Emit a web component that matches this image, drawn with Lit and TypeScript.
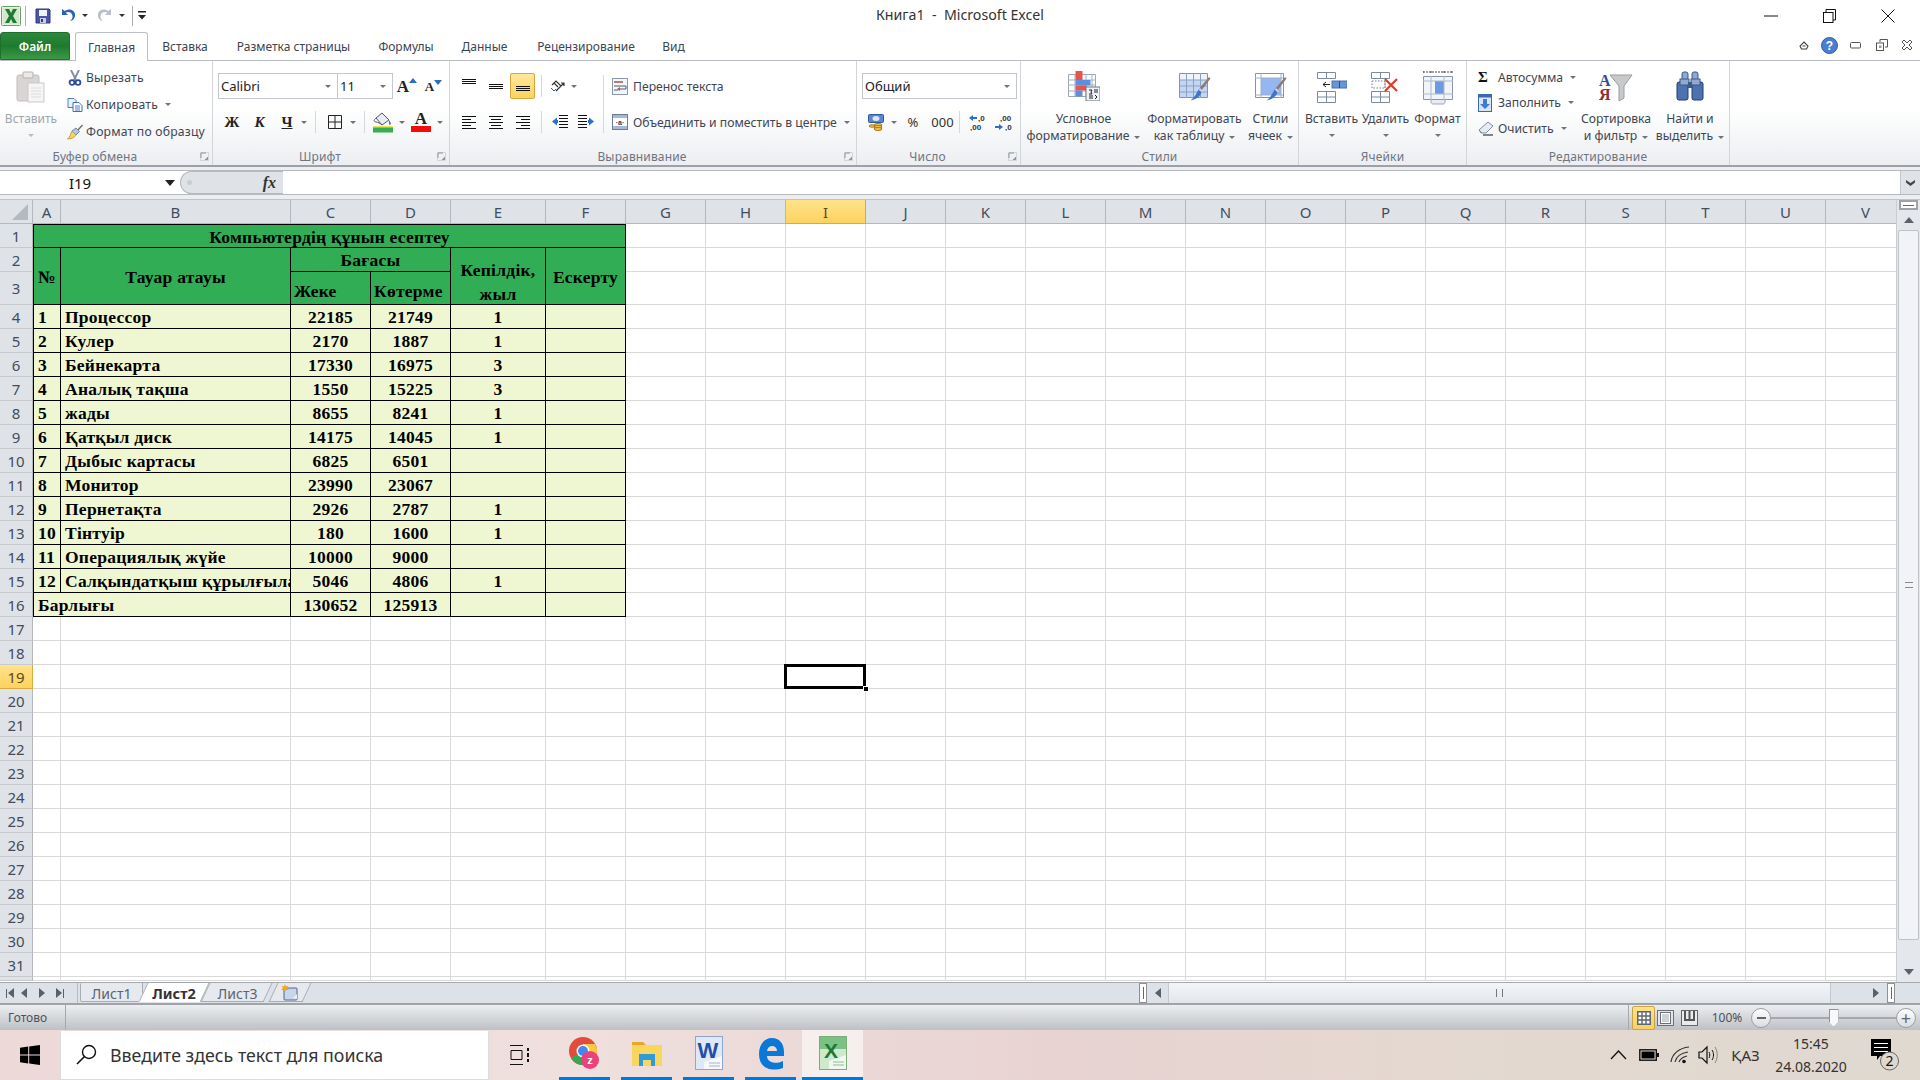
import { LitElement, html, svg, css } from "lit";
import { customElement } from "lit/decorators.js";

const dd = html`<span class="dd"></span>`;
const hLines = (w: number, rows: number[][], extra: unknown = null) => html`<svg width=${w} height="16" viewBox="0 0 ${w} 16">${rows.map(
  ([a, b, y]) => svg`<path d="M${a} ${y + 0.5}H${b}" stroke="#111" stroke-width="1"/>`)}${extra}</svg>`;

const I = {
  xl: html`<svg width="20" height="20" viewBox="0 0 20 20"><rect x=".5" y=".5" width="19" height="19" rx="1" fill="#e4f1df" stroke="#6a9d68"/><rect x="2" y="2" width="16" height="16" fill="#d2e8cb"/><path d="M4 3h4l2 4 2-4h4l-4 7 4 7h-4l-2-4-2 4H4l4-7z" fill="#1f7a34"/></svg>`,
  save: html`<svg width="16" height="16" viewBox="0 0 16 16"><path d="M1 1h13l1 1v13H1z" fill="#4a55a8" stroke="#2e3680"/><rect x="4" y="2" width="8" height="6" fill="#f0f3fa"/><rect x="5" y="10" width="6" height="5" fill="#c8cde0"/><rect x="6" y="11" width="2" height="3" fill="#333a80"/></svg>`,
  undo: html`<svg width="15" height="15" viewBox="0 0 15 15"><path d="M1 1v6h6L4.700 4.800C7.500 3 11 4.500 11.500 8c.3 2-1 4-2.500 5 3.500-.5 5.500-3.500 5-7C13 1.500 8 0 3.800 3z" fill="#2a64b8"/></svg>`,
  redo: html`<svg width="15" height="15" viewBox="0 0 15 15"><path d="M14 1v6H8l2.300-2.200C7.500 3 4 4.500 3.500 8c-.3 2 1 4 2.500 5C2.500 12.500.5 9.500 1 6 2 1.500 7 0 11.200 3z" fill="#b8bfc8"/></svg>`,
  qa: html`<svg width="8" height="9" viewBox="0 0 8 9"><path d="M0 0h8v1.500H0zM0 4h8L4 8.500z" fill="#222"/></svg>`,
  paste: html`<svg width="30" height="32" viewBox="0 0 30 32"><rect x="1" y="4" width="22" height="26" rx="2" fill="#d9d5d4" stroke="#c2bebd"/><rect x="7" y="1" width="10" height="6" rx="1" fill="#ebe8e6" stroke="#b5b1b0"/><path d="M12 12h16v19H12z" fill="#f6f5f5" stroke="#c9c9c9"/><path d="M15 17h10M15 20h10M15 23h10M15 26h10" stroke="#dcdcdc"/></svg>`,
  cut: html`<svg width="14" height="16" viewBox="0 0 14 16"><path d="M3 0l5 10M11 0L6 10" stroke="#7c8aa0" stroke-width="1.800"/><circle cx="4" cy="12.500" r="2.400" fill="none" stroke="#2b4c9a" stroke-width="1.800"/><circle cx="10" cy="12.500" r="2.400" fill="none" stroke="#2b4c9a" stroke-width="1.800"/></svg>`,
  copy: html`<svg width="16" height="14" viewBox="0 0 16 14"><path d="M1 .5h6l2 2v7H1z" fill="#eaf1fb" stroke="#4f7cc0"/><path d="M6 4.500h6l3 3v6H6z" fill="#fff" stroke="#3f6fb8"/><path d="M8 8h5M8 10h5M8 12h5" stroke="#4f7cc0"/></svg>`,
  brush: html`<svg width="16" height="16" viewBox="0 0 16 16"><path d="M10 6l5-5.500 1 1L11 7z" fill="#7a6a60"/><path d="M9 4l3.500 3.500L9 11 5 7z" fill="#b7c4dc" stroke="#7483a0"/><path d="M5 7l4 4c-2 3-5 4-8.500 4C3 13 3.500 10 5 7z" fill="#f2d36b" stroke="#c79f3c"/></svg>`,
  launch: html`<svg width="9" height="9" viewBox="0 0 9 9"><path d="M.5.500h8v8h-8z" fill="none" stroke="#d2d5d9"/><path d="M1 1h5M1 1v5" stroke="#8f959c"/><path d="M8 8H4.500L8 4.500z" fill="#8f959c"/></svg>`,
  grow: html`<svg width="8" height="5" viewBox="0 0 8 5"><path d="M0 5l4-5 4 5z" fill="#2a6cc0"/></svg>`,
  shrink: html`<svg width="8" height="5" viewBox="0 0 8 5"><path d="M0 0l4 5 4-5z" fill="#2a6cc0"/></svg>`,
  borders: html`<svg width="14" height="14" viewBox="0 0 14 14"><path d="M.5.500h13v13H.5zM7 .5v13M.5 7h13" fill="none" stroke="#222"/></svg>`,
  fill: html`<svg width="20" height="21" viewBox="0 0 20 21"><path d="M3 6l6-5 7 7-7 5z" fill="#e8ecf3" stroke="#4a5a78"/><path d="M3 6c-2 2-3 3 0 4 2 .5 4 1 6 3" fill="none" stroke="#4a5a78"/><path d="M16 8c1.500 2 2.500 3.500 1.500 4.500s-2 0-1.500-4.500z" fill="#3c76c8"/><rect y="14" width="20" height="2" fill="#f5e24c"/><rect y="15.500" width="20" height="5" fill="#33ae55"/></svg>`,
  orient: html`<svg width="16" height="15" viewBox="0 0 16 15"><path d="M2 6l4-4 5 5M4 4l4 4M6 12l8-8M11 4h3v3" fill="none" stroke="#333" stroke-width="1.200"/><path d="M1 9l3 3 2-2" stroke="#2a64b8" fill="none"/></svg>`,
  indL: html`<svg width="16" height="16" viewBox="0 0 16 16"><path d="M7 1.500h9M7 4.500h9M7 7.500h9M7 10.500h9M7 13.500h9" stroke="#111"/><path d="M0 7.500l5-4v2.500h1v3H5v2.500z" fill="#2a70c8"/></svg>`,
  indR: html`<svg width="16" height="16" viewBox="0 0 16 16"><path d="M0 1.500h9M0 4.500h9M0 7.500h9M0 10.500h9M0 13.500h9" stroke="#111"/><path d="M16 7.500l-5-4v2.500h-1v3h1v2.500z" fill="#2a70c8"/></svg>`,
  wrap: html`<svg width="16" height="17" viewBox="0 0 16 17"><rect x=".5" y=".5" width="15" height="16" fill="#f3f6fa" stroke="#8b97a8"/><path d="M2 4h9M2 8h12v3H8M2 12h4" stroke="#4a5a78" fill="none"/><path d="M8 9l-3 2 3 2z" fill="#c05a20"/><path d="M2 4h9" stroke="#c05a20"/></svg>`,
  merge: html`<svg width="16" height="16" viewBox="0 0 16 16"><rect x=".5" y=".5" width="15" height="15" fill="#fff" stroke="#6c7c94"/><rect x="1" y="1" width="14" height="3" fill="#a8b8d0"/><rect x="1" y="12" width="14" height="3" fill="#a8b8d0"/><text x="8" y="11" font-size="7" font-family="Liberation Sans" font-weight="700" text-anchor="middle" fill="#22406a">·a·</text></svg>`,
  money: html`<svg width="16" height="17" viewBox="0 0 16 17"><rect x=".5" y=".5" width="15" height="8" rx="1" fill="#5b86c8" stroke="#2d5aa0"/><ellipse cx="8" cy="4.500" rx="3.500" ry="2.500" fill="#dbe6f6"/><ellipse cx="10" cy="11" rx="4" ry="1.500" fill="#f3c84e" stroke="#a87a1c"/><ellipse cx="10" cy="13" rx="4" ry="1.500" fill="#f3c84e" stroke="#a87a1c"/><ellipse cx="10" cy="15" rx="4" ry="1.500" fill="#f3c84e" stroke="#a87a1c"/><ellipse cx="4" cy="12" rx="3" ry="1.200" fill="#f3c84e" stroke="#a87a1c"/></svg>`,
  decUp: html`<svg width="17" height="17" viewBox="0 0 17 17"><path d="M0 4l4-3v2h4v2H4v2z" fill="#2a70c8"/><text x="9" y="7" font-size="8" font-family="Liberation Sans" font-weight="700" fill="#333">,0</text><text x="1" y="16" font-size="8" font-family="Liberation Sans" font-weight="700" fill="#333">,00</text></svg>`,
  decDn: html`<svg width="17" height="17" viewBox="0 0 17 17"><text x="5" y="7" font-size="8" font-family="Liberation Sans" font-weight="700" fill="#333">,00</text><path d="M8 13l-4-3v2H0v2h4v2z" fill="#2a70c8"/><text x="10" y="16" font-size="8" font-family="Liberation Sans" font-weight="700" fill="#333">,0</text></svg>`,
  cond: html`<svg width="32" height="30" viewBox="0 0 32 30"><path d="M.5 3.500h27v22H.5z" fill="#fff" stroke="#9aa5b5"/><path d="M7 3v22M18 3v22M24 3v22M0 9h28M0 14h28M0 20h28" stroke="#a4afbf"/><rect x="7.500" y="0" width="7" height="9" fill="#e8544a"/><rect x="7.500" y="9" width="15" height="5.500" fill="#5f8fdc"/><rect x="7.500" y="14.500" width="11" height="5" fill="#e8544a"/><rect x="7.500" y="19.500" width="7" height="6" fill="#5f8fdc"/><rect x="18" y="16" width="14" height="14" fill="#eef2f7" stroke="#6a7686"/><path d="M21 19h3l-1 2 1 2h-3M26 19h4M26 21h4M21 25h4M21 27h4M27 24l2 2-2 2" fill="none" stroke="#222"/></svg>`,
  tbl: html`<svg width="32" height="32" viewBox="0 0 32 32"><path d="M.5 2.500h28v24H.5z" fill="#c5d6f4" stroke="#7f93b4"/><rect x="1" y="3" width="27" height="6" fill="#eef3fb"/><path d="M7.500 2v25M14.500 2v25M21.500 2v25M0 9h28M0 15h28M0 21h28" stroke="#8ca0c0"/><path d="M20 18L30 6l1.500 1.500L22 20z" fill="#8a7a70"/><path d="M21 17l3 3-1 1.500-3-3z" fill="#cbd3df"/><path d="M19.500 18.500l3 3c-2 5-6 7-11 8 4-3 6-7 8-11z" fill="#3f74c8"/></svg>`,
  cstyle: html`<svg width="32" height="32" viewBox="0 0 32 32"><path d="M.5 2.500h28v24H.5z" fill="#fff" stroke="#7f93b4"/><rect x="6" y="7" width="20" height="17" fill="#95b6f2"/><path d="M6 2v25M26 2v25M0 7h28M0 24h28" stroke="#9fb0c8"/><path d="M20 18L30 6l1.500 1.500L22 20z" fill="#8a7a70"/><path d="M21 17l3 3-1 1.500-3-3z" fill="#cbd3df"/><path d="M19.500 18.500l3 3c-2 5-6 7-11 8 4-3 6-7 8-11z" fill="#3f74c8"/></svg>`,
  ins: html`<svg width="30" height="32" viewBox="0 0 30 32"><path d="M.5 1.500h18v6H.5zM9.500 1.500v6M.5 20.500h18v11H.5zM.5 26h18M9.500 20.500v11" fill="#fff" stroke="#7a8aa0"/><rect x="15" y="10" width="15" height="7" fill="#6a93d8" stroke="#4a70b0"/><path d="M22.500 10v7" stroke="#2a4a88"/><path d="M6 13.500h7M9 11l-3 2.500 3 2.500" fill="none" stroke="#222"/></svg>`,
  del: html`<svg width="30" height="32" viewBox="0 0 30 32"><path d="M.5 1.500h18v6H.5zM9.500 1.500v6M.5 20.500h18v11H.5zM.5 26h18M9.500 20.500v11" fill="#fff" stroke="#7a8aa0"/><path d="M1 10h13v7H1zM14 10v7" fill="#fff" stroke="#6a7a96" stroke-dasharray="1.500 1.500"/><path d="M14 8l12 12M26 8L14 20" stroke="#e23a2a" stroke-width="2.200"/></svg>`,
  fmt: html`<svg width="30" height="34" viewBox="0 0 30 34"><path d="M0 1h29M0 0v3M8 0v3M21 0v3M29 0v3" stroke="#444" stroke-dasharray="2 1"/><path d="M.5 5.500h29v23H.5z" fill="#f1f4f8" stroke="#8a96a8"/><rect x="12" y="10" width="9" height="13" fill="#6e9ae4"/><path d="M8 5v24M21 5v24M0 10h30M0 23h30" stroke="#b0bac8"/><path d="M8 29v2c0 1 1 2 2 2h10c1 0 2-1 2-2v-2" fill="#e8ecf2" stroke="#9aa5b5"/></svg>`,
  fillD: html`<svg width="15" height="18" viewBox="0 0 15 18"><rect x=".5" y=".5" width="13" height="17" fill="#d9e6fa" stroke="#3a69b0"/><rect x="1" y="1" width="12" height="2.500" fill="#3a69b0"/><path d="M5 5h4v5h3l-5 5-5-5h3z" fill="#3d7bd4"/></svg>`,
  erase: html`<svg width="16" height="15" viewBox="0 0 16 15"><path d="M10 1l5 4-7 7H3L1 9z" fill="#e6ebf2" stroke="#7f8da2"/><path d="M1 9l3 3" stroke="#7f8da2"/><path d="M5 14h10" stroke="#111"/></svg>`,
  sort: html`<svg width="34" height="34" viewBox="0 0 34 34"><path d="M11 4h22l-8 11v12l-5 3V15z" fill="#c7c9cb" stroke="#9a9ca0"/><text x="0" y="15" font-size="16" font-weight="700" font-family="Liberation Serif" fill="#2a50a0">А</text><text x="0" y="29" font-size="16" font-weight="700" font-family="Liberation Serif" fill="#8a3030">Я</text></svg>`,
  find: html`<svg width="28" height="30" viewBox="0 0 28 30"><rect x="6" y="1" width="6" height="8" rx="2" fill="#8fa8d0" stroke="#3c5688"/><rect x="16" y="1" width="6" height="8" rx="2" fill="#8fa8d0" stroke="#3c5688"/><rect x="1" y="11" width="11" height="18" rx="2" fill="#4d72b0" stroke="#223c70"/><rect x="16" y="11" width="11" height="18" rx="2" fill="#4d72b0" stroke="#223c70"/><rect x="4" y="8" width="9" height="6" fill="#91a9d0" stroke="#3c5688"/><rect x="15" y="8" width="9" height="6" fill="#91a9d0" stroke="#3c5688"/><rect x="12" y="11" width="4" height="6" fill="#3a5a90"/></svg>`,
  min: html`<svg width="14" height="2" viewBox="0 0 14 2"><path d="M0 1h14" stroke="#111"/></svg>`,
  rest: html`<svg width="13" height="14" viewBox="0 0 13 14"><path d="M3 3V.5h9.500V11H10" fill="none" stroke="#111"/><rect x=".5" y="3.500" width="9.500" height="10" fill="#fff" stroke="#111"/></svg>`,
  close: html`<svg width="14" height="14" viewBox="0 0 14 14"><path d="M.5.500l13 13M13.500.5l-13 13" stroke="#111"/></svg>`,
  up: html`<svg width="10" height="9" viewBox="0 0 10 9"><path d="M5 1l4 4-1.500 3h-5L1 5zM3.500 5h3" fill="none" stroke="#444" stroke-width="1.100"/></svg>`,
  help: html`<svg width="17" height="17" viewBox="0 0 17 17"><circle cx="8.500" cy="8.500" r="8" fill="#4a7fd0" stroke="#2c5ea8"/><text x="8.500" y="13" font-size="12" font-weight="700" text-anchor="middle" font-family="Liberation Sans" fill="#fff">?</text></svg>`,
  smin: html`<svg width="11" height="7" viewBox="0 0 11 7"><rect x=".5" y=".5" width="10" height="5.500" rx="1" fill="#fff" stroke="#555"/></svg>`,
  srest: html`<svg width="12" height="12" viewBox="0 0 12 12"><path d="M4 3V.5h7.500V8H9" fill="#fff" stroke="#555"/><rect x=".5" y="4" width="7" height="7.500" fill="#fff" stroke="#555"/><rect x="3" y="6.500" width="2.500" height="2.500" fill="#999"/></svg>`,
  sclose: html`<svg width="12" height="12" viewBox="0 0 12 12"><path d="M1 3l2-2 3 3 3-3 2 2-3 3 3 3-2 2-3-3-3 3-2-2 3-3z" fill="#fff" stroke="#555"/></svg>`,
  more: html`<svg width="11" height="8" viewBox="0 0 11 8"><path d="M1 1l4.500 3L10 1v2.500L5.500 7 1 3.500z" fill="#444"/></svg>`,
  win: html`<svg width="20" height="20" viewBox="0 0 20 20"><path d="M0 2.800l8.200-1.200V9.500H0zM9.200 1.400L20 0v9.500H9.200zM0 10.500h8.200v7.900L0 17.200zM9.200 10.500H20V20L9.200 18.500z" fill="#000"/></svg>`,
  search: html`<svg width="21" height="21" viewBox="0 0 21 21"><circle cx="13" cy="8" r="6.500" fill="none" stroke="#111" stroke-width="1.400"/><path d="M8.500 12.500L1 20" stroke="#111" stroke-width="1.600"/></svg>`,
  task: html`<svg width="20" height="20" viewBox="0 0 20 20"><path d="M0 .5h13M0 19.500h13M1 5.500h11v9H1z" fill="none" stroke="#111"/><path d="M18 3v3M18 8v4M18 14v3" stroke="#111" stroke-width="2"/></svg>`,
  chrome: html`<svg width="31" height="32" viewBox="0 0 31 32"><circle cx="14" cy="14" r="14" fill="#e34b3c"/><path d="M14 14L2 21A14 14 0 0 0 20 27z" fill="#36a853"/><path d="M14 14l6 13A14 14 0 0 0 26 7H14z" fill="#f7c945"/><circle cx="14" cy="14" r="6.500" fill="#fff"/><circle cx="14" cy="14" r="5" fill="#4488ee"/><circle cx="21" cy="23" r="9" fill="#e9427c"/><text x="21" y="27" font-size="11" font-weight="700" text-anchor="middle" font-family="Liberation Sans" fill="#fff">z</text></svg>`,
  folder: html`<svg width="30" height="26" viewBox="0 0 30 26"><path d="M0 2h11l3 3h16v21H0z" fill="#f9d65c"/><path d="M0 2h11l3 3H0z" fill="#e7a72a"/><path d="M7 14h16v12h-4v-6h-8v6H7z" fill="#2d9bdc"/><rect x="11" y="20" width="8" height="6" fill="#f9d65c"/></svg>`,
  word: html`<svg width="28" height="34" viewBox="0 0 28 34"><rect x=".5" y=".5" width="27" height="33" fill="#dfe8f6" stroke="#8ea6cc"/><text x="13" y="22" font-size="22" font-weight="700" text-anchor="middle" font-family="Liberation Sans" fill="#1f4fa8">W</text><path d="M9 26l18-6v13H9z" fill="#f6f8fc"/><path d="M14 27h11M14 30h11" stroke="#a0b4d4"/></svg>`,
  edge: html`<svg width="26" height="33" viewBox="0 0 26 33"><path d="M1 17C1 8 6 1 14 1c7 0 12 5 12 14v4H9c0 6 8 9 16 5v7c-11 4-24 1-24-14zm8-3h10c0-6-9-7-10 0z" fill="#0a78d7"/></svg>`,
  xlBig: html`<svg width="28" height="34" viewBox="0 0 28 34"><rect x=".5" y=".5" width="27" height="33" fill="#cfe9cd" stroke="#7aae78"/><rect x="1" y="1" width="26" height="12" fill="#7cc184"/><text x="12" y="22" font-size="21" font-weight="700" text-anchor="middle" font-family="Liberation Sans" fill="#1d7a36">X</text><path d="M10 25l17-6v14H10z" fill="#f1f8ef"/><path d="M14 26h11M14 29h11" stroke="#8cc28c"/></svg>`,
  chev: html`<svg width="17" height="10" viewBox="0 0 17 10"><path d="M1 9l7.500-8L16 9" fill="none" stroke="#111" stroke-width="1.300"/></svg>`,
  batt: html`<svg width="20" height="12" viewBox="0 0 20 12"><rect x=".8" y=".8" width="16.500" height="10.400" fill="none" stroke="#111" stroke-width="1.400"/><rect x="2.500" y="2.500" width="13" height="7" fill="#000"/><rect x="18" y="4" width="2" height="4" fill="#111"/></svg>`,
  wifi: html`<svg width="20" height="18" viewBox="0 0 20 18"><path d="M1 16C2 8 9 2 19 1M5 16c1-5 6-9 13-10M9 16c1-3 4-5 8-6" fill="none" stroke="#333" stroke-width="1.200"/><circle cx="14" cy="15.500" r="1.800" fill="#111"/></svg>`,
  vol: html`<svg width="20" height="20" viewBox="0 0 20 20"><path d="M1 7h3l5-5v16l-5-5H1z" fill="none" stroke="#111" stroke-width="1.200"/><path d="M11 7c1 2 1 4 0 6M14 5c2 3 2 7 0 10" fill="none" stroke="#111"/><path d="M17 2c3 5 3 11 0 16" fill="none" stroke="#888"/></svg>`,
  note: html`<svg width="28" height="32" viewBox="0 0 28 32"><path d="M0 0h20v17H9l-3 4v-4H0z" fill="#000"/><path d="M3 4.500h14M3 8.500h14M3 12.500h14" stroke="#fff"/><circle cx="18.500" cy="22" r="9" fill="#e0d8d0" stroke="#666"/><text x="18.500" y="27" font-size="14" text-anchor="middle" font-family="Noto Sans" fill="#111">2</text></svg>`,
  vNormal: html`<svg width="14" height="14" viewBox="0 0 14 14"><rect width="14" height="14" fill="#5f6670"/><path d="M1.500 1.500h11v11h-11z" fill="#fff"/><path d="M5 1v12M9 1v12M1 5h12M1 9h12" stroke="#5f6670" stroke-width="1.400"/></svg>`,
  vPage: html`<svg width="17" height="16" viewBox="0 0 17 16"><rect x=".5" y=".5" width="16" height="15" fill="#e3e5e8" stroke="#6c7178"/><rect x="3.500" y="2.500" width="10" height="11" fill="#fff" stroke="#6c7178"/><path d="M5 5h7M5 7h7M5 9h7M5 11h7" stroke="#a0a4a9"/></svg>`,
  vBreak: html`<svg width="17" height="16" viewBox="0 0 17 16"><rect x=".5" y=".5" width="16" height="15" fill="#e8eaed" stroke="#666"/><path d="M4 1v9h9V1M8.500 1v9" fill="none" stroke="#555" stroke-width="2"/></svg>`,
  newSheet: html`<svg width="18" height="18" viewBox="0 0 18 18"><rect x="3" y="4" width="13" height="12" rx="1" fill="#c9d6ea" stroke="#50658c"/><path d="M12 14l4-4v5z" fill="#eef2f7"/><path d="M4 0l1 2.500L7.500 1.500 6 4l2 2-3 0-1 2-1-2-3 0 2-2-1.500-2.500L3 2.500z" fill="#f4a51f"/></svg>`,
};

const LETTERS = "ABCDEFGHIJKLMNOPQRSTUV".split("");
const ROWS = [
  ["1", "Процессор", "22185", "21749", "1"],
  ["2", "Кулер", "2170", "1887", "1"],
  ["3", "Бейнекарта", "17330", "16975", "3"],
  ["4", "Аналық тақша", "1550", "15225", "3"],
  ["5", "жады", "8655", "8241", "1"],
  ["6", "Қатқыл диск", "14175", "14045", "1"],
  ["7", "Дыбыс картасы", "6825", "6501", ""],
  ["8", "Монитор", "23990", "23067", ""],
  ["9", "Пернетақта", "2926", "2787", "1"],
  ["10", "Тінтуір", "180", "1600", "1"],
  ["11", "Операциялық жүйе", "10000", "9000", ""],
  ["12", "Салқындатқыш құрылғылар", "5046", "4806", "1"],
];

interface Cell { r: number; c: number; rs?: number; cs?: number; t?: unknown; k: string; }
const CELLS: Cell[] = [
  { r: 1, c: 1, cs: 6, t: "Компьютердің құнын есептеу", k: "h ctr" },
  { r: 2, c: 1, rs: 2, t: "№", k: "h ctr" },
  { r: 2, c: 2, rs: 2, t: "Тауар атауы", k: "h ctr" },
  { r: 2, c: 3, cs: 2, t: "Бағасы", k: "h ctr" },
  { r: 3, c: 3, t: "Жеке", k: "h low" },
  { r: 3, c: 4, t: "Көтерме", k: "h low" },
  { r: 2, c: 5, rs: 2, t: html`Кепілдік,<br />жыл`, k: "h ctr wrapc" },
  { r: 2, c: 6, rs: 2, t: "Ескерту", k: "h ctr" },
  ...ROWS.flatMap((v, i) => {
    const r = i + 4;
    return [
      { r, c: 1, t: v[0], k: "b" },
      { r, c: 2, t: v[1], k: "b" },
      { r, c: 3, t: v[2], k: "b ctr" },
      { r, c: 4, t: v[3], k: "b ctr" },
      { r, c: 5, t: v[4], k: "b ctr" },
      { r, c: 6, t: "", k: "b" },
    ];
  }),
  { r: 16, c: 1, cs: 2, t: "Барлығы", k: "b" },
  { r: 16, c: 3, t: "130652", k: "b ctr" },
  { r: 16, c: 4, t: "125913", k: "b ctr" },
  { r: 16, c: 5, t: "", k: "b" },
  { r: 16, c: 6, t: "", k: "b" },
];

@customElement("app-root")
export class AppRoot extends LitElement {
  static styles = css`
    :host { display: block; width: 1920px; height: 1080px; overflow: hidden; background: #fff;
      font-family: "Noto Sans", "Liberation Sans", sans-serif; font-size: 12px; color: #3f4652; }
    * { box-sizing: border-box; }
    .app { display: flex; flex-direction: column; width: 1920px; height: 1080px; }

    .dd { display: inline-block; width: 0; height: 0; border: 3px solid transparent; border-top: 3px solid #6f747b; border-bottom: 0; vertical-align: middle; }

    .title { height: 32px; display: grid; grid-template-columns: 1fr auto 1fr; align-items: center; background: #fff; }
    .qat { display: grid; grid-template-columns: 21px 8px 27px 24px 10px 29px 6px 14px 6px; justify-content: start; justify-items: center; align-items: center; }
    .qat .dd { border-top-color: #333; }
    .vsep { width: 1px; height: 20px; background: #a9adb3; }
    .ttext { font-size: 14.2px; color: #333; padding-bottom: 2px; }
    .wctl { display: grid; grid-template-columns: 58px 58px 60px; justify-items: center; align-items: center; justify-content: end; padding-right: 2px; }

    .tabs { height: 29px; display: flex; align-items: stretch; }
    .file { width: 70px; background: linear-gradient(#2c8a3b, #1f7a2f 50%, #3c9a45); border-radius: 3px 3px 0 0; border: 1px solid #1e6e2c; color: #fff; font-weight: 600; display: flex; align-items: center; justify-content: center; }
    .tab { display: flex; align-items: center; justify-content: center; font-size: 12px; color: #3c4450; }
    .home { width: 73px; margin-left: 5px; border: 1px solid #bcc0c5; border-bottom: 0; border-radius: 3px 3px 0 0; background: #fff; margin-bottom: -1px; position: relative; z-index: 1; }
    .t1 { width: 74px; } .t2 { width: 143px; } .t3 { width: 82px; } .t4 { width: 75px; } .t5 { width: 128px; } .t6 { width: 47px; }
    .sub { margin-left: auto; display: grid; grid-template-columns: 29px 22px 30px 23px 27px; justify-items: center; align-items: center; padding-bottom: 2px; }

    .ribbon { height: 107px; display: flex; border-top: 1px solid #b9bcc1; border-bottom: 2px solid #9da1a7; font-size: 12.2px;
      background: linear-gradient(#fff 0, #fff 45%, #eceef1 100%); }
    .group { display: flex; flex-direction: column; border-right: 1px solid #d2d5da; }
    .gbody { height: 86px; display: flex; }
    .glabel { height: 18px; display: flex; align-items: center; color: #6d7582; font-size: 12px; line-height: 14px; letter-spacing: .15px; padding-top: 1px; }
    .glabel span { flex: 1; text-align: center; }
    .lch { width: 22px; display: flex; justify-content: center; padding-left: 6px; }

    .g-clip { width: 213px; } .g-font { width: 237px; } .g-align { width: 407px; } .g-num { width: 164px; }
    .g-style { width: 278px; } .g-cell { width: 168px; } .g-edit { width: 263px; border-right: 1px solid #d2d5da; }

    .big { display: flex; flex-direction: column; align-items: center; padding-top: 10px; line-height: 17px; text-align: center; white-space: nowrap; }
    .big .ico { height: 39px; display: flex; align-items: flex-start; justify-content: center; }
    .big .dd { margin-left: 5px; }
    .big .under { height: 17px; display: flex; align-items: center; justify-content: center; }
    .big .under .dd { margin: 0; }

    .paste { width: 62px; color: #a2a6ac; font-size: 12px; }
    .paste .dd { border-top-color: #bbb; }
    .small { flex: 1; padding-top: 3px; display: grid; grid-template-rows: repeat(3, 27px); }
    .si { display: flex; align-items: center; white-space: nowrap; }
    .si .i { width: 22px; display: flex; justify-content: center; }
    .si .dd { margin-left: 7px; }
    .small .si { padding-left: 2px; letter-spacing: .2px; }

    .rows2 { padding-top: 12px; display: grid; grid-template-rows: 26px 26px; row-gap: 10px; }
    .g-font .rows2 { padding-left: 5px; }
    .r { display: grid; justify-items: center; align-items: center; }
    .fr1 { grid-template-columns: 120px 55px 28px 25px; }
    .fr2 { grid-template-columns: 28px 27px 28px 6px 16px 23px 14px 8px 30px 8px 30px 8px; }
    .combo { width: 100%; height: 26px; border: 1px solid #c3c6ca; background: #fff; display: flex; align-items: center; justify-content: space-between; padding: 0 6px 0 2px; color: #222; font-size: 13px; }
    .combo + .combo { border-left: 0; }
    .fs { font-family: "Liberation Serif", serif; font-weight: 700; color: #222; font-size: 15px; line-height: 1; }
    .fs.i2 { font-style: italic; }
    .fs.u2 { text-decoration: underline; }
    .grow { display: flex; align-items: flex-start; font-size: 17px; }
    .grow.s { font-size: 13px; align-items: flex-start; }
    .tcol { display: flex; flex-direction: column; align-items: center; font-size: 17px; line-height: 14px; }
    .tcol b { width: 20px; height: 6px; background: #f20d0d; display: block; }
    .sepv { width: 1px; height: 22px; background: #d5d8dc; }
    .al-left { width: 153px; padding-left: 5px; }
    .ar1 { grid-template-columns: 28px 26px 27px 10px 24px 8px; justify-content: start; }
    .ar2 { grid-template-columns: 28px 26px 27px 10px 27px 25px; justify-content: start; }
    .selb { width: 25px; height: 26px; background: linear-gradient(#ffe79a, #fdd35f); border: 1px solid #d6a73f; border-radius: 2px; display: flex; justify-content: center; align-items: center; }
    .sep-tall { width: 1px; height: 58px; background: #d5d8dc; margin-top: 14px; }
    .al-right { padding: 12px 0 0 8px; display: grid; grid-template-rows: 26px 26px; row-gap: 10px; }
    .al-right .si .i { width: 21px; justify-content: flex-start; }
    .al-right .si .dd { margin-left: 7px; }

    .g-num .rows2 { padding-left: 5px; width: 160px; }
    .nr2 { grid-template-columns: 28px 8px 30px 29px 4px 33px 19px; }
    .pct { font-size: 13px; color: #333; }

    .s1 { width: 125px; } .s2 { width: 97px; } .s3 { width: 55px; }
    .g-cell .gbody { padding-left: 5px; }
    .c1 { width: 55px; } .c2 { width: 53px; } .c3 { width: 51px; }

    .ed-left { width: 111px; padding: 3px 0 0 9px; display: grid; grid-template-rows: 26px 25px 26px; }
    .ed-left .si .i { width: 22px; justify-content: flex-start; padding-left: 2px; }
    .sigma { font-family: "Liberation Serif", serif; font-weight: 700; font-size: 15px; color: #111; line-height: 1; }
    .e1 { width: 76px; } .e2 { width: 72px; }

    .strip { height: 3px; background: #eceef1; }
    .fbar { height: 25px; display: flex; background: #fff; border-top: 1px solid #b6b9bd; border-bottom: 1px solid #b6b9bd; }
    .name { width: 180px; display: grid; grid-template-columns: 160px 20px; align-items: center; justify-items: center; color: #111; font-size: 15px; }
    .name .tri { width: 0; height: 0; border: 5px solid transparent; border-top: 6px solid #222; border-bottom: 0; }
    .pill { width: 103px; background: #dfe3e8; border-radius: 12px 0 0 12px; border: 1px solid #b6b9bd; border-right: 0; display: flex; align-items: center; justify-content: space-between; padding: 0 7px 0 6px; }
    .pill i { width: 5px; height: 5px; border-radius: 50%; background: #c9ccd1; }
    .fx { font-family: "Liberation Serif", serif; font-style: italic; font-weight: 700; font-size: 16px; color: #333; }
    .finput { flex: 1; background: #fff; }
    .fexp { width: 20px; background: #dfe3e8; display: flex; align-items: center; justify-content: center; border-left: 1px solid #c4c7cb; }
    .strip2 { height: 5px; background: #edeef1; border-bottom: 1px solid #c0c3c8; }

    .main { height: 782px; display: flex; }
    .sheet { width: 1896px; height: 782px; overflow: hidden; display: grid;
      grid-template-columns: 33px 28px 230px 80px 80px 95px 80px repeat(16, 80px);
      grid-template-rows: 24px 24px 24px 33px repeat(28, 24px) 4px; }
    .ch, .rh { background: #dfe3e8; color: #3f4d5e; font-size: 15px; display: flex; align-items: center; justify-content: center; border-right: 1px solid #b4b8be; border-bottom: 1px solid #b4b8be; }
    .rh { border-bottom-color: #c6cacf; }
    .corner { background: #dfe3e8; border-right: 1px solid #b4b8be; border-bottom: 1px solid #b4b8be; display: flex; align-items: flex-end; justify-content: flex-end; padding: 0 4px 3px 0; }
    .corner svg { display: block; }
    .on { background: linear-gradient(#ffe28a, #fdd35f); border-color: #d9aa3e; color: #5a4a20; }
    .cell { border-right: 1px solid #d9d9d9; border-bottom: 1px solid #d9d9d9; position: relative; }
    .sel::before { content: ""; box-sizing: border-box; position: absolute; left: -2px; top: -1px; width: 82px; height: 25px; border: 3px solid #000; z-index: 2; }
    .sel::after { content: ""; box-sizing: border-box; position: absolute; right: -4px; bottom: -4px; width: 6px; height: 6px; background: #000; border: 1px solid #fff; z-index: 3; }
    .d { display: flex; align-items: center; overflow: hidden; white-space: nowrap; padding: 1px 0 0 4px; font-family: "Liberation Serif", serif; font-weight: 700; font-size: 17.5px; letter-spacing: .25px; line-height: 24px; color: #000;
      border-right: 1px solid #000; border-bottom: 1px solid #000; }
    .d.first { border-left: 1px solid #000; }
    .d.top { border-top: 1px solid #000; }
    .d.h { background: #31ae55; }
    .d.b { background: #eff6d2; }
    .d.ctr { justify-content: center; padding-left: 0; text-align: center; }
    .d.low { align-items: flex-end; padding-bottom: 1px; padding-left: 3px; }
    .d.wrapc { white-space: normal; line-height: 24px; padding-top: 11px; }

    .vscroll { width: 24px; height: 782px; background: #e4e7ec; display: flex; flex-direction: column; align-items: center; border-left: 1px solid #c9ccd1; }
    .vsplit { width: 19px; height: 10px; background: #fff; border: 2px solid #9fa3a8; display: flex; align-items: center; justify-content: center; }
    .vsplit i { width: 11px; height: 1px; background: #666; }
    .varrow { height: 20px; display: flex; align-items: center; justify-content: center; }
    .tup { width: 0; height: 0; border: 5px solid transparent; border-bottom: 6px solid #5e6268; border-top: 0; }
    .tdn { width: 0; height: 0; border: 5px solid transparent; border-top: 6px solid #5e6268; border-bottom: 0; }
    .vthumb { width: 21px; height: 710px; background: #f1f3f6; border: 1px solid #bfc3c9; border-radius: 2px; display: flex; align-items: center; justify-content: center; }
    .vthumb i { width: 8px; height: 6px; border-top: 1px solid #888; border-bottom: 1px solid #888; }
    .vspace { flex: 1; }

    .sbar { height: 21px; display: flex; background: #dde1e8; border-top: 1px solid #a5a9ae; align-items: stretch; }
    .nav { width: 78px; display: grid; grid-template-columns: 10px 18px 18px 18px; padding-left: 5px; align-items: center; justify-items: center; border-right: 1px solid #b8bcc2; }
    .tl, .tr { width: 0; height: 0; border: 4px solid transparent; border-bottom-width: 5px; border-top-width: 5px; }
    .tl { border-right: 6px solid #5a6068; border-left: 0; }
    .tr { border-left: 6px solid #5a6068; border-right: 0; }
    .navb { display: flex; align-items: center; gap: 1px; }
    .navb i { width: 1px; height: 9px; background: #5a6068; }
    .sheets { display: flex; padding-left: 2px; }
    .st { width: 63px; position: relative; display: flex; align-items: center; justify-content: center; font-size: 14px; color: #5a6470; }
    .st::before { content: ""; position: absolute; inset: 0 0 1px 0; background: #e6e9ee; border: 1px solid #a9adb3; border-top: 0; transform: skewX(-25deg); z-index: 0; }
    .st span { position: relative; z-index: 1; display: flex; }
    .st.a { color: #333; font-weight: 700; width: 62px; font-size: 14.5px; }
    .st.a::before { background: #fff; border-bottom: 1px solid #fff; }
    .st.first::before { transform: none; border-radius: 2px 0 0 2px; }
    .st.last { padding-left: 2px; }
    .st.new { width: 34px; margin-left: 5px; }
    .sspace { flex: 1; }
    .split { width: 8px; background: #fff; border: 1px solid #8d9196; display: flex; align-items: center; justify-content: center; }
    .split i { width: 1px; height: 12px; background: #666; }
    .harrow { width: 21px; display: flex; align-items: center; justify-content: center; }
    .harrow.rt { width: 56px; justify-content: flex-end; padding-right: 8px; }
    .hthumb { width: 663px; background: linear-gradient(#f3f5f8, #e2e6eb); border-left: 1px solid #c5c9ce; border-right: 1px solid #c5c9ce; display: flex; align-items: center; justify-content: center; }
    .hthumb i { width: 7px; height: 8px; border-left: 1px solid #777; border-right: 1px solid #777; }
    .send { width: 25px; }

    .status { height: 27px; display: flex; align-items: center; border-top: 2px solid #a0a4a9; background: linear-gradient(#eceef0, #bdc0c5); color: #4b525c; font-size: 12px; }
    .ready { width: 66px; height: 100%; display: flex; align-items: center; padding-left: 8px; border-right: 1px solid #a5a9ae; }
    .srt { margin-left: auto; height: 100%; display: grid; grid-template-columns: 23px 21px 27px 48px 20px 125px 20px; align-items: center; justify-items: center; padding: 0 4px 0 3px; border-left: 1px solid #a5a9ae; }
    .vb { width: 23px; height: 24px; background: linear-gradient(#ffe28a, #f9cf60); border: 1px solid #c9a34a; border-radius: 2px; display: flex; align-items: center; justify-content: center; }
    .circ { width: 20px; height: 20px; border-radius: 50%; border: 1px solid #9a9ea4; background: linear-gradient(#fff, #d9dce0); display: flex; align-items: center; justify-content: center; font-size: 18px; line-height: 1; color: #666; }
    .circ i { width: 9px; height: 2px; background: #666; }
    .slider { width: 125px; height: 2px; background: #a5a8ad; display: flex; justify-content: center; align-items: center; }
    .thumb { width: 10px; height: 18px; background: #f7f8f9; border: 1px solid #8f9398; clip-path: polygon(0 0, 100% 0, 100% 70%, 50% 100%, 0 70%); }

    .task { height: 50px; display: flex; background: linear-gradient(90deg, #ecd9d8 0%, #efe0dd 30%, #e8d3d2 55%, #e4d8d0 75%, #dfd9d0 100%); }
    .start { width: 60px; display: flex; align-items: center; justify-content: center; }
    .sbox { width: 429px; height: 49px; margin-top: 1px; background: #fff; display: flex; align-items: center; padding-left: 15px; gap: 13px; font-size: 17.8px; color: #333; border: 1px solid #dcdcdc; border-top: 0; }
    .tview { width: 70px; display: flex; align-items: center; justify-content: flex-start; padding-left: 21px; }
    .apps { display: flex; gap: 11px; }
    .app-i { width: 51px; display: flex; align-items: center; justify-content: center; border-bottom: 3px solid #0078d7; }
    .app-i.act { width: 61px; background: #f7eeee; margin-left: -5px; }
    .tray { margin-left: auto; display: grid; grid-template-columns: 28px 33px 30px 26px 49px 82px 66px; justify-items: center; align-items: center; padding-right: 2px; color: #333; }
    .lang { font-size: 15px; }
    .clock { display: flex; flex-direction: column; align-items: center; font-size: 14px; line-height: 23px; }
  `;

  private big(cls: string, icon: unknown, l1: string, l2: unknown) {
    return html`<div class="big ${cls}"><div class="ico">${icon}</div><div>${l1}</div>${l2}</div>`;
  }

  private grid() {
    const covered = new Set<string>();
    CELLS.forEach((x) => {
      for (let r = x.r; r < x.r + (x.rs || 1); r++) for (let c = x.c; c < x.c + (x.cs || 1); c++) covered.add(r + "," + c);
    });
    const items: unknown[] = [];
    for (let r = 1; r <= 32; r++) for (let c = 1; c <= 22; c++) {
      if (covered.has(r + "," + c)) continue;
      const sel = r === 19 && c === 9;
      items.push(html`<div class="cell ${sel ? "sel" : ""}" style="grid-area:${r + 1}/${c + 1}"></div>`);
    }
    return html`<div class="sheet">
      <div class="corner"><svg width="16" height="16" viewBox="0 0 16 16"><path d="M16 0v16H0z" fill="#b4b9c0"/></svg></div>
      ${LETTERS.map((l) => html`<div class="ch ${l === "I" ? "on" : ""}">${l}</div>`)}
      ${Array.from({ length: 32 }, (_, i) => html`<div class="rh ${i === 18 ? "on" : ""}" style="grid-area:${i + 2}/1">${i < 31 ? i + 1 : ""}</div>`)}
      ${CELLS.map((x) => html`<div class="d ${x.k} ${x.c === 1 ? "first" : ""} ${x.r === 1 ? "top" : ""}"
        style="grid-area:${x.r + 1}/${x.c + 1}/span ${x.rs || 1}/span ${x.cs || 1}"><span>${x.t}</span></div>`)}
      ${items}
    </div>`;
  }

  render() {
    const under = html`<div class="under">${dd}</div>`;
    const launch = html`<div class="lch">${I.launch}</div>`;
    return html`<div class="app">
      <div class="title">
        <div class="qat">${I.xl}<span class="vsep"></span>${I.save}${I.undo}${dd}${I.redo}${dd}<span class="vsep"></span>${I.qa}</div>
        <div class="ttext">Книга1&nbsp; - &nbsp;Microsoft Excel</div>
        <div class="wctl">${I.min}${I.rest}${I.close}</div>
      </div>
      <div class="tabs">
        <div class="file">Файл</div>
        <div class="tab home">Главная</div>
        <div class="tab t1">Вставка</div>
        <div class="tab t2">Разметка страницы</div>
        <div class="tab t3">Формулы</div>
        <div class="tab t4">Данные</div>
        <div class="tab t5">Рецензирование</div>
        <div class="tab t6">Вид</div>
        <div class="sub">${I.up}${I.help}${I.smin}${I.srest}${I.sclose}</div>
      </div>
      <div class="ribbon">
        <div class="group g-clip">
          <div class="gbody">
            <div class="big paste"><div class="ico">${I.paste}</div><div>Вставить</div>${under}</div>
            <div class="small">
              <div class="si"><span class="i">${I.cut}</span>Вырезать</div>
              <div class="si"><span class="i">${I.copy}</span>Копировать${dd}</div>
              <div class="si"><span class="i">${I.brush}</span>Формат по образцу</div>
            </div>
          </div>
          <div class="glabel"><span>Буфер обмена</span>${launch}</div>
        </div>
        <div class="group g-font">
          <div class="gbody"><div class="rows2">
            <div class="r fr1">
              <div class="combo">Calibri${dd}</div><div class="combo">11${dd}</div>
              <div class="fs grow">А${I.grow}</div><div class="fs grow s">А${I.shrink}</div>
            </div>
            <div class="r fr2">
              <span class="fs">Ж</span><span class="fs i2">К</span><span class="fs u2">Ч</span>${dd}<span class="sepv"></span>
              ${I.borders}${dd}<span class="sepv"></span>${I.fill}${dd}
              <span class="fs tcol">А<b></b></span>${dd}
            </div>
          </div></div>
          <div class="glabel"><span>Шрифт</span>${launch}</div>
        </div>
        <div class="group g-align">
          <div class="gbody">
            <div class="rows2 al-left">
              <div class="r ar1">
                ${hLines(14, [[0, 14, 1], [0, 14, 3], [0, 14, 5]])}
                ${hLines(14, [[0, 14, 6], [0, 14, 8], [0, 14, 10]])}
                <div class="selb">${hLines(14, [[0, 14, 8], [0, 14, 10], [0, 14, 12]])}</div>
                <span class="sepv"></span>${I.orient}${dd}
              </div>
              <div class="r ar2">
                ${hLines(14, [[0, 14, 2], [0, 9, 5], [0, 14, 8], [0, 9, 11], [0, 14, 14]])}
                ${hLines(14, [[0, 14, 2], [2, 12, 5], [0, 14, 8], [2, 12, 11], [0, 14, 14]])}
                ${hLines(14, [[0, 14, 2], [5, 14, 5], [0, 14, 8], [5, 14, 11], [0, 14, 14]])}
                <span class="sepv"></span>${I.indL}${I.indR}
              </div>
            </div>
            <div class="sep-tall"></div>
            <div class="al-right">
              <div class="si"><span class="i">${I.wrap}</span>Перенос текста</div>
              <div class="si"><span class="i">${I.merge}</span>Объединить и поместить в центре${dd}</div>
            </div>
          </div>
          <div class="glabel"><span>Выравнивание</span>${launch}</div>
        </div>
        <div class="group g-num">
          <div class="gbody"><div class="rows2">
            <div class="combo">Общий${dd}</div>
            <div class="r nr2">${I.money}${dd}<span class="pct">%</span><span class="pct">000</span><span class="sepv"></span>${I.decUp}${I.decDn}</div>
          </div></div>
          <div class="glabel"><span>Число</span>${launch}</div>
        </div>
        <div class="group g-style">
          <div class="gbody">
            ${this.big("s1", I.cond, "Условное", html`<div>форматирование${dd}</div>`)}
            ${this.big("s2", I.tbl, "Форматировать", html`<div>как таблицу${dd}</div>`)}
            ${this.big("s3", I.cstyle, "Стили", html`<div>ячеек${dd}</div>`)}
          </div>
          <div class="glabel"><span>Стили</span></div>
        </div>
        <div class="group g-cell">
          <div class="gbody">
            ${this.big("c1", I.ins, "Вставить", under)}
            ${this.big("c2", I.del, "Удалить", under)}
            ${this.big("c3", I.fmt, "Формат", under)}
          </div>
          <div class="glabel"><span>Ячейки</span></div>
        </div>
        <div class="group g-edit">
          <div class="gbody">
            <div class="ed-left">
              <div class="si"><span class="i sigma">Σ</span>Автосумма${dd}</div>
              <div class="si"><span class="i">${I.fillD}</span>Заполнить${dd}</div>
              <div class="si"><span class="i">${I.erase}</span>Очистить${dd}</div>
            </div>
            ${this.big("e1", I.sort, "Сортировка", html`<div>и фильтр${dd}</div>`)}
            ${this.big("e2", I.find, "Найти и", html`<div>выделить${dd}</div>`)}
          </div>
          <div class="glabel"><span>Редактирование</span></div>
        </div>
      </div>
      <div class="strip"></div>
      <div class="fbar">
        <div class="name"><span>I19</span><span class="tri"></span></div>
        <div class="pill"><i></i><span class="fx">fx</span></div>
        <div class="finput"></div>
        <div class="fexp">${I.more}</div>
      </div>
      <div class="strip2"></div>
      <div class="main">
        ${this.grid()}
        <div class="vscroll">
          <div class="vsplit"><i></i></div>
          <div class="varrow"><span class="tup"></span></div>
          <div class="vthumb"><i></i></div>
          <div class="vspace"></div>
          <div class="varrow"><span class="tdn"></span></div>
        </div>
      </div>
      <div class="sbar">
        <div class="nav">
          <span class="navb"><i></i><span class="tl"></span></span><span class="tl"></span><span class="tr"></span><span class="navb"><span class="tr"></span><i></i></span>
        </div>
        <div class="sheets">
          <div class="st first"><span>Лист1</span></div>
          <div class="st a"><span>Лист2</span></div>
          <div class="st last"><span>Лист3</span></div>
          <div class="st new"><span>${I.newSheet}</span></div>
        </div>
        <div class="sspace"></div>
        <div class="split"><i></i></div>
        <div class="harrow"><span class="tl"></span></div>
        <div class="hthumb"><i></i></div>
        <div class="harrow rt"><span class="tr"></span></div>
        <div class="split"><i></i></div>
        <div class="send"></div>
      </div>
      <div class="status">
        <div class="ready">Готово</div>
        <div class="srt">
          <div class="vb">${I.vNormal}</div>${I.vPage}${I.vBreak}
          <span>100%</span>
          <div class="circ"><i></i></div>
          <div class="slider"><span class="thumb"></span></div>
          <div class="circ">+</div>
        </div>
      </div>
      <div class="task">
        <div class="start">${I.win}</div>
        <div class="sbox">${I.search}<span>Введите здесь текст для поиска</span></div>
        <div class="tview">${I.task}</div>
        <div class="apps">
          <div class="app-i">${I.chrome}</div>
          <div class="app-i">${I.folder}</div>
          <div class="app-i">${I.word}</div>
          <div class="app-i">${I.edge}</div>
          <div class="app-i act">${I.xlBig}</div>
        </div>
        <div class="tray">
          ${I.chev}${I.batt}${I.wifi}${I.vol}
          <span class="lang">ҚАЗ</span>
          <div class="clock"><span>15:45</span><span>24.08.2020</span></div>
          ${I.note}
        </div>
      </div>
    </div>`;
  }
}
